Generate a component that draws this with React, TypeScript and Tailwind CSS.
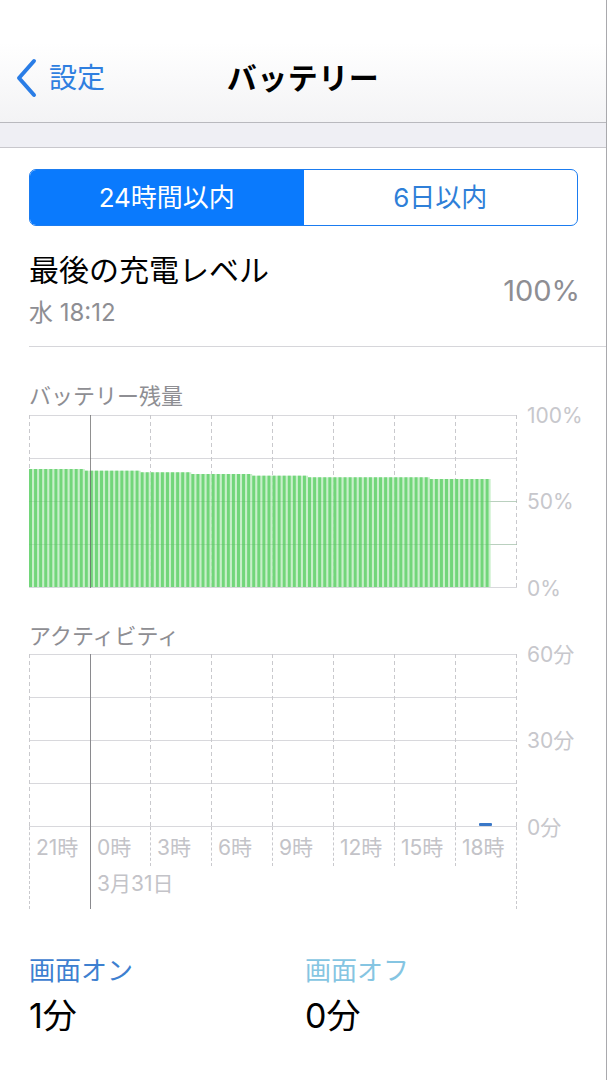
import React from "react";

const W = 487;
const cols = [0, 61, 121, 182, 243, 304, 365, 426, 487];

// battery level steps (px from chart top) by x position
const steps: [number, number][] = [
  [54, 54],
  [110, 55.7],
  [161, 57.3],
  [223, 59],
  [277, 60.7],
  [396, 62.3],
  [999, 64],
];

function topFor(x: number) {
  for (const [lim, t] of steps) if (x < lim) return t;
  return 64;
}

const pitch = W / 96;
const bars = Array.from({ length: 91 }, (_, i) => {
  const x = i * pitch;
  return { x, top: topFor(x) };
});

function GridLines({ h }: { h: number }) {
  const rows = [0.5, 43.5, 86.5, 129.5, 172.5];
  return (
    <g>
      {rows.map((y) => (
        <line key={y} x1={0} x2={W + 1} y1={y} y2={y} stroke="#d8d8dc" strokeWidth={1} />
      ))}
      {cols.map((c, i) =>
        i === 1 ? null : (
          <line
            key={c}
            x1={c + 0.5}
            x2={c + 0.5}
            y1={0}
            y2={h}
            stroke="#c9c9cd"
            strokeWidth={1}
            strokeDasharray="4 3"
          />
        )
      )}
    </g>
  );
}

function BatteryChart() {
  return (
    <svg width={W + 1} height={173} className="block shrink-0">
      <GridLines h={173} />
      {bars.map((b, i) => (
        <g key={i}>
          <rect x={b.x} y={b.top} width={pitch} height={172 - b.top} fill="#c8efca" />
          <rect x={b.x} y={b.top} width={3} height={172 - b.top} fill="#72d67a" />
        </g>
      ))}
      <line x1={0} x2={W + 1} y1={86.5} y2={86.5} stroke="#5fb868" strokeOpacity={0.25} />
      <line x1={0} x2={W + 1} y1={129.5} y2={129.5} stroke="#5fb868" strokeOpacity={0.25} />
      <line x1={61.5} x2={61.5} y1={0} y2={173} stroke="#6b6b6b" strokeOpacity={0.75} />
    </svg>
  );
}

function ActivityChart() {
  return (
    <svg width={W + 1} height={173} className="block shrink-0">
      <GridLines h={173} />
      <line x1={61.5} x2={61.5} y1={0} y2={173} stroke="#8a8a8e" />
      <rect x={450} y={169} width={13} height={3} rx={1} fill="#3a78c8" />
    </svg>
  );
}

function YLabels({ labels }: { labels: string[] }) {
  return (
    <div className="ml-[10px] flex h-[173px] flex-col justify-between">
      {labels.map((l) => (
        <div key={l} className="flex h-0 items-center text-[21px] leading-none text-[#c7c7cc]">
          {l}
        </div>
      ))}
    </div>
  );
}

const hours = [
  { label: "21時", w: "w-[61px]", solid: false },
  { label: "0時", w: "w-[60px]", solid: true },
  { label: "3時", w: "w-[61px]", solid: false },
  { label: "6時", w: "w-[61px]", solid: false },
  { label: "9時", w: "w-[61px]", solid: false },
  { label: "12時", w: "w-[61px]", solid: false },
  { label: "15時", w: "w-[61px]", solid: false },
  { label: "18時", w: "w-[61px]", solid: false },
];

export default function App() {
  return (
    <div className="min-h-screen w-[609px] bg-white font-['Inter','Noto_Sans_CJK_JP',sans-serif] text-black">
      <div className="min-h-screen w-[607px] border-r border-[#a9a9ad]">
        {/* nav */}
        <header className="h-[123px] border-b border-[#b9b9be] bg-gradient-to-b from-white from-35% to-[#f3f3f5] pt-[40px]">
          <div className="grid h-[76px] grid-cols-[1fr_auto_1fr] items-center">
            <div className="flex items-center pl-[15px]">
              <svg width="22" height="40" viewBox="0 0 22 40" className="shrink-0">
                <polyline
                  points="19,3 4,20 19,37"
                  fill="none"
                  stroke="#2a7de6"
                  strokeWidth={4}
                  strokeLinecap="round"
                  strokeLinejoin="round"
                />
              </svg>
              <span className="ml-[12px] text-[28px] leading-none text-[#2f7fe0]">設定</span>
            </div>
            <h1 className="text-[30px] font-bold leading-none tracking-[0.5px]">バッテリー</h1>
            <div />
          </div>
        </header>
        <div className="h-[25px] border-b border-[#c8c7cc] bg-[#efeff4]" />

        <main className="pl-[29px]">
          {/* segmented */}
          <div className="mt-[21px] mr-[28px] flex h-[57px] overflow-hidden rounded-[7px] border-[1.5px] border-[#1b7cf0]">
            <div className="flex flex-1 items-center justify-center bg-[#0a7afd] text-[26px] text-white">
              24時間以内
            </div>
            <div className="flex flex-1 items-center justify-center text-[26px] text-[#2f7fd8]">
              6日以内
            </div>
          </div>

          {/* last charge */}
          <div className="flex items-center justify-between border-b border-[#d6d6da] pt-[26px] pb-[18px] pr-[26px]">
            <div>
              <div className="text-[30px] leading-[36px]">最後の充電レベル</div>
              <div className="mt-[10px] text-[24px] leading-[30px] text-[#8e8e93]">水 18:12</div>
            </div>
            <div className="text-[29px] leading-none text-[#8e8e93]">100%</div>
          </div>

          {/* battery level */}
          <div className="mt-[35px] text-[22px] leading-[28px] text-[#8e8e93]">バッテリー残量</div>
          <div className="mt-[5px] flex">
            <BatteryChart />
            <YLabels labels={["100%", "50%", "0%"]} />
          </div>

          {/* activity */}
          <div className="mt-[34px] text-[22px] leading-[28px] text-[#8e8e93]">アクティビティ</div>
          <div className="mt-[4px] flex">
            <ActivityChart />
            <YLabels labels={["60分", "30分", "0分"]} />
          </div>
          <div className="flex h-[39px] w-[488px] border-r border-dashed border-[#c9c9cd]">
            {hours.map((h) => (
              <div
                key={h.label}
                className={
                  h.solid
                    ? `${h.w} border-l border-solid border-[#8a8a8e] pl-[6px] pt-[9px] text-[21px] leading-[24px] text-[#c3c3c8]`
                    : `${h.w} border-l border-dashed border-[#c9c9cd] pl-[6px] pt-[9px] text-[21px] leading-[24px] text-[#c3c3c8]`
                }
              >
                {h.label}
              </div>
            ))}
          </div>
          <div className="flex h-[43px] w-[488px] border-x border-dashed border-[#c9c9cd]">
            <div className="w-[60px]" />
            <div className="border-l border-solid border-[#8a8a8e] pl-[6px] pt-[6px] text-[21px] leading-[24px] text-[#c3c3c8]">
              3月31日
            </div>
          </div>

          {/* screen on/off */}
          <div className="mt-[46px] grid grid-cols-[276px_1fr]">
            <div>
              <div className="text-[26px] leading-[32px] text-[#3d80d0]">画面オン</div>
              <div className="mt-[9px] text-[34px] leading-[40px]">1分</div>
            </div>
            <div>
              <div className="text-[26px] leading-[32px] text-[#85c5e2]">画面オフ</div>
              <div className="mt-[9px] text-[34px] leading-[40px]">0分</div>
            </div>
          </div>
        </main>
      </div>
    </div>
  );
}
